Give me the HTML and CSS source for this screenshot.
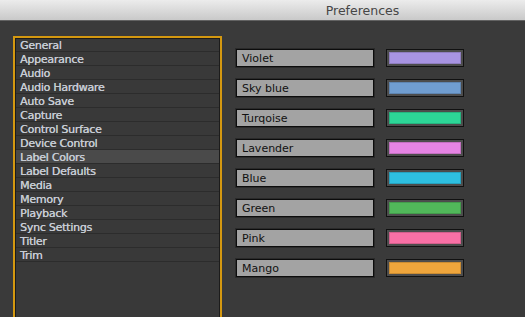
FILE: index.html
```html
<!DOCTYPE html>
<html lang="en">
  <head>
    <meta charset="UTF-8" />
    <title>Preferences</title>
    <link rel="stylesheet" href="styles.css">
  </head>
  <body>
    <div class="titlebar">Preferences</div>

    <div class="content">
      <div class="sidebar">
        <div class="nav-item">General</div>
        <div class="nav-item">Appearance</div>
        <div class="nav-item">Audio</div>
        <div class="nav-item">Audio Hardware</div>
        <div class="nav-item">Auto Save</div>
        <div class="nav-item">Capture</div>
        <div class="nav-item">Control Surface</div>
        <div class="nav-item">Device Control</div>
        <div class="nav-item selected">Label Colors</div>
        <div class="nav-item">Label Defaults</div>
        <div class="nav-item">Media</div>
        <div class="nav-item">Memory</div>
        <div class="nav-item">Playback</div>
        <div class="nav-item">Sync Settings</div>
        <div class="nav-item">Titler</div>
        <div class="nav-item">Trim</div>
      </div>

      <div class="labels">
        <div class="label-row">
          <div class="label-name">Violet</div>
          <div class="swatch"><div class="swatch-fill violet"></div></div>
        </div>
        <div class="label-row">
          <div class="label-name">Sky blue</div>
          <div class="swatch"><div class="swatch-fill sky-blue"></div></div>
        </div>
        <div class="label-row">
          <div class="label-name">Turqoise</div>
          <div class="swatch"><div class="swatch-fill turqoise"></div></div>
        </div>
        <div class="label-row">
          <div class="label-name">Lavender</div>
          <div class="swatch"><div class="swatch-fill lavender"></div></div>
        </div>
        <div class="label-row">
          <div class="label-name">Blue</div>
          <div class="swatch"><div class="swatch-fill blue"></div></div>
        </div>
        <div class="label-row">
          <div class="label-name">Green</div>
          <div class="swatch"><div class="swatch-fill green"></div></div>
        </div>
        <div class="label-row">
          <div class="label-name">Pink</div>
          <div class="swatch"><div class="swatch-fill pink"></div></div>
        </div>
        <div class="label-row">
          <div class="label-name">Mango</div>
          <div class="swatch"><div class="swatch-fill mango"></div></div>
        </div>
      </div>
    </div>
  </body>
</html>
```

FILE: styles.css
```css
html, body {
  height: 100%;
}

body {
  margin: 0;
  overflow: hidden;
  background: #3a3a3a;
  font-family: "DejaVu Sans", Verdana, sans-serif;
}

.titlebar {
  height: 20px;
  line-height: 21px;
  padding-left: 200px;
  text-align: center;
  font-size: 12.5px;
  color: #464646;
  background: linear-gradient(#ececec, #c9c9c9);
  border-bottom: 1px solid #626262;
}

.content {
  display: flex;
  align-items: flex-start;
  gap: 14px;
  padding: 15px 0 0 13px;
}

.sidebar {
  width: 209px;
  height: 300px;
  box-sizing: border-box;
  border: 2px solid #d49810;
  box-shadow: inset 0 0 0 1px #1c1c1c;
  background: #393939;
  padding: 0 1px;
}

.nav-item {
  height: 12px;
  padding: 1px 0 0 4px;
  line-height: 13px;
  font-size: 11px;
  color: #c6cbd3;
  border-bottom: 1px solid #2c2c2c;
  text-shadow: 0.3px 0 0 #c6cbd3;
  letter-spacing: -0.25px;
}

.nav-item.selected {
  background: #4a4a4a;
}

.labels {
  display: flex;
  flex-direction: column;
  gap: 12px;
  margin-top: 13px;
}

.label-row {
  display: flex;
  gap: 12px;
}

.label-name {
  width: 138px;
  height: 18px;
  box-sizing: border-box;
  border: 1px solid #0c0c0c;
  box-shadow: 0 0 0 1px #2a2a2a;
  background: #a3a3a3;
  padding-left: 5px;
  font-size: 11px;
  line-height: 17px;
  color: #111;
}

.swatch {
  width: 78px;
  height: 18px;
  box-sizing: border-box;
  border: 1px solid #111;
  background: #4c4c4c;
  padding: 2px;
}

.swatch-fill {
  height: 100%;
  box-shadow: inset 0 0 0 1px rgba(0, 0, 0, 0.15);
}

.violet { background: #a894e2; }
.sky-blue { background: #709dd0; }
.turqoise { background: #2dd597; }
.lavender { background: #e584e3; }
.blue { background: #2ebfe0; }
.green { background: #51b85a; }
.pink { background: #f870a5; }
.mango { background: #eea53c; }
```
